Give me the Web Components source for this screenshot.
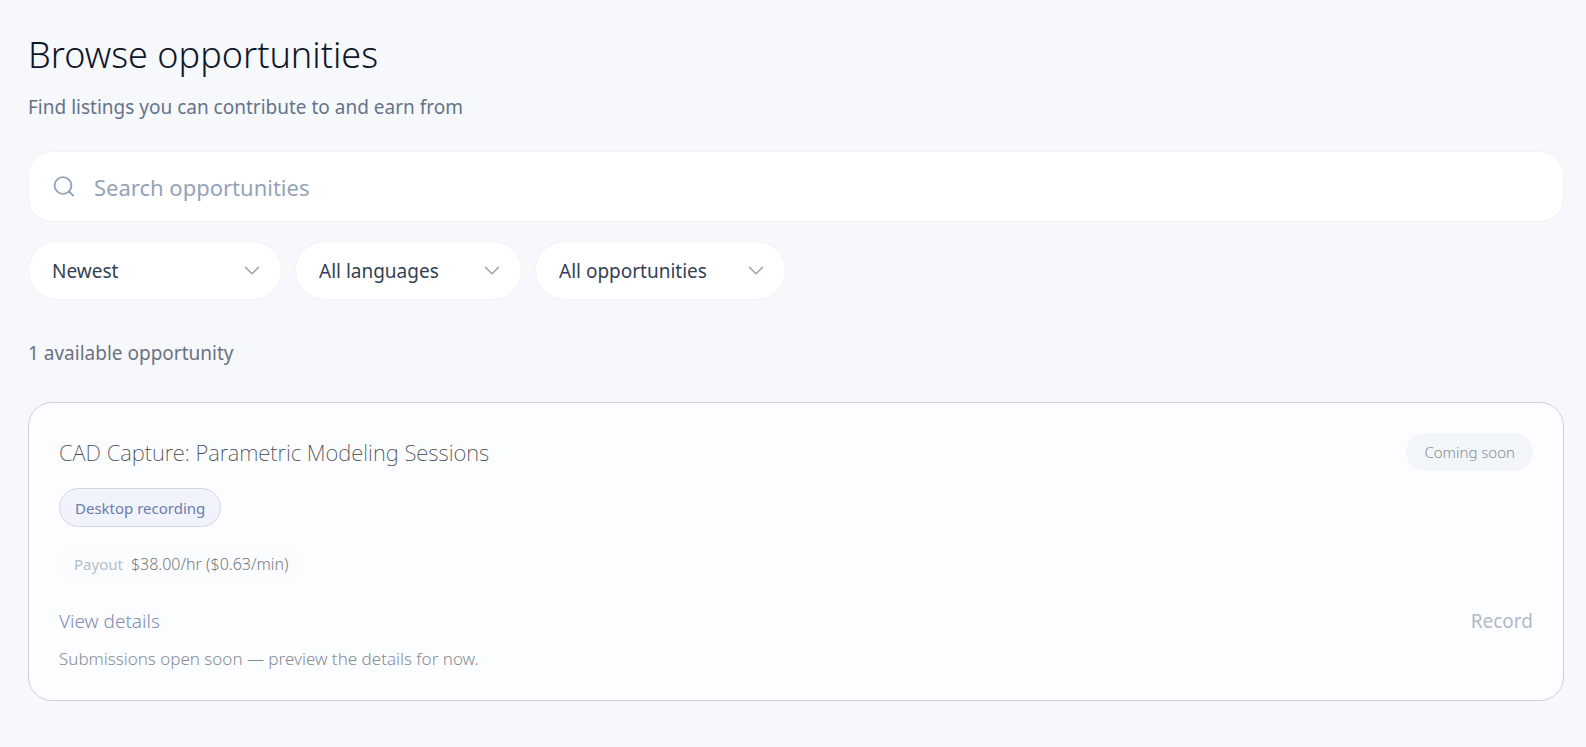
<!DOCTYPE html>
<html lang="en">
<head>
<meta charset="utf-8">
<meta name="viewport" content="width=device-width, initial-scale=1">
<title>Browse opportunities</title>
<style>
  body { margin: 0; background: #f6f8fc; font-family: "Noto Sans", "Open Sans", sans-serif; color: #334155; }
</style>
</head>
<body>
<browse-page>
  <page-heading slot="heading">
    Browse opportunities
    <span slot="subtitle">Find listings you can contribute to and earn from</span>
  </page-heading>
  <search-field slot="search" label="Search opportunities"></search-field>
  <filter-select slot="filters" label="Sort order" options="Newest|Oldest" style="--width: 254px"></filter-select>
  <filter-select slot="filters" label="Language" options="All languages|English" style="--width: 227px"></filter-select>
  <filter-select slot="filters" label="Opportunity type" options="All opportunities|Desktop" style="--width: 251px"></filter-select>
  <span slot="count">1 available opportunity</span>
  <opportunity-card>
    <span slot="title">CAD Capture: Parametric Modeling Sessions</span>
    <pill-badge slot="status">Coming soon</pill-badge>
    <pill-badge slot="kind" variant="outlined">Desktop recording</pill-badge>
    <span slot="payout">$38.00/hr ($0.63/min)</span>
    <span slot="note">Submissions open soon — preview the details for now.</span>
  </opportunity-card>
</browse-page>

<script>
const define = (name, html, setup) => {
  const template = document.createElement('template');
  template.innerHTML = html;
  customElements.define(name, class extends HTMLElement {
    constructor() {
      super();
      this.attachShadow({ mode: 'open' }).append(template.content.cloneNode(true));
    }
    connectedCallback() { if (setup) setup(this, this.shadowRoot); }
  });
};

define('browse-page', `
  <style>
    :host { display: block; padding: 31px 22px 44px 28px; }
    .search { margin-top: 30px; }
    .filters { display: flex; flex-wrap: wrap; gap: 13px; margin-top: 19px; }
    .count { margin: 39px 0 0; font-size: 19px; line-height: 28px; color: #6b7280; }
    .list { margin-top: 35px; }
  </style>
  <main>
    <slot name="heading"></slot>
    <div class="search"><slot name="search"></slot></div>
    <div class="filters"><slot name="filters"></slot></div>
    <p class="count"><slot name="count"></slot></p>
    <div class="list"><slot></slot></div>
  </main>`);

define('page-heading', `
  <style>
    :host { display: block; }
    h1 { margin: 0; font-size: 36px; line-height: 48px; font-weight: 300; color: #0f172a; }
    p { margin: 14px 0 0; font-size: 19px; line-height: 28px; color: #64748b; }
  </style>
  <h1><slot></slot></h1>
  <p><slot name="subtitle"></slot></p>`);

define('search-field', `
  <style>
    :host { display: block; }
    label { display: flex; align-items: center; gap: 18px; box-sizing: border-box; height: 71px; padding: 0 23px;
      background: #fff; border: 1px solid #f0f2f5; border-radius: 24px; }
    svg { flex: none; width: 24px; height: 24px; fill: none; stroke: #94a3b8; stroke-width: 1.9; stroke-linecap: round; stroke-linejoin: round; }
    input { flex: 1; min-width: 0; padding: 0; border: 0; outline: 0; background: none; font: 22px/32px "Noto Sans", "Open Sans", sans-serif; color: #334155; }
    input::placeholder { color: #94a3b8; opacity: 1; }
  </style>
  <label>
    <svg viewBox="0 0 24 24" aria-hidden="true"><circle cx="11" cy="10.5" r="8.4"/><path d="M21.2 20.7l-4.2-4.2"/></svg>
    <input type="search">
  </label>`, (host, root) => {
    const input = root.querySelector('input');
    input.placeholder = host.getAttribute('label');
    input.setAttribute('aria-label', host.getAttribute('label'));
  });

define('filter-select', `
  <style>
    :host { display: block; width: var(--width); }
    label { display: grid; align-items: center; }
    select, svg { grid-area: 1 / 1; }
    select { appearance: none; box-sizing: border-box; width: 100%; height: 59px; margin: 0; padding: 0 44px 0 23px;
      background: #fff; border: 1px solid #f0f2f5; border-radius: 30px; font: 19px/28px "Noto Sans", "Open Sans", sans-serif; color: #334155; }
    svg { justify-self: end; margin-right: 18px; width: 24px; height: 24px; pointer-events: none;
      fill: none; stroke: #9ca3af; stroke-width: 1.6; stroke-linecap: round; stroke-linejoin: round; }
  </style>
  <label>
    <select></select>
    <svg viewBox="0 0 24 24" aria-hidden="true"><path d="M5.5 8.3l6.5 6.5 6.5-6.5"/></svg>
  </label>`, (host, root) => {
    const select = root.querySelector('select');
    select.setAttribute('aria-label', host.getAttribute('label'));
    select.replaceChildren(...host.getAttribute('options').split('|').map(text => new Option(text)));
  });

define('pill-badge', `
  <style>
    :host { display: inline-flex; align-items: center; box-sizing: border-box; height: 38px; padding: 0 18px; border-radius: 20px;
      background: #f2f6f9; font-size: 15px; line-height: 24px; font-weight: 300; color: #868c96; white-space: nowrap; }
    :host([variant="outlined"]) { height: 39px; padding: 0 15px; background: #f0f3fc; border: 1px solid #d2d7e2; font-weight: 400; color: #6b7cac; }
  </style>
  <slot></slot>`);

define('opportunity-card', `
  <style>
    :host { display: block; }
    article { display: flex; flex-direction: column; align-items: flex-start; padding: 30px 30px 29px; background: #fcfdfe;
      border: 1px solid #cfd2da; border-radius: 24px; }
    .row { display: flex; justify-content: space-between; align-items: center; align-self: stretch; gap: 16px; }
    h2 { margin: 0; font-size: 22px; line-height: 38px; font-weight: 200; color: #45494f; }
    .kind { display: flex; margin-top: 17px; }
    .payout { display: flex; align-items: center; gap: 8px; height: 34px; margin-top: 20px; padding: 0 15px; border-radius: 12px;
      background: #fbfcfd; font-size: 15px; line-height: 24px; color: #b3bccb; }
    .amount { font-size: 16px; font-weight: 300; color: #77797e; }
    .actions { margin-top: 26px; font-size: 19px; line-height: 28px; }
    a { font-weight: 300; color: #838cb4; text-decoration: none; }
    button { padding: 0; border: 0; background: none; font: 400 19px/28px "Noto Sans", "Open Sans", sans-serif; color: #b1b9c9; }
    .note { margin: 12px 0 0; font-size: 17px; line-height: 24px; font-weight: 300; color: #868c97; }
  </style>
  <article>
    <div class="row"><h2><slot name="title"></slot></h2><slot name="status"></slot></div>
    <div class="kind"><slot name="kind"></slot></div>
    <div class="payout"><span>Payout</span><span class="amount"><slot name="payout"></slot></span></div>
    <div class="row actions"><a href="#details">View details</a><button type="button" disabled>Record</button></div>
    <p class="note"><slot name="note"></slot></p>
  </article>`);
</script>
</body>
</html>
